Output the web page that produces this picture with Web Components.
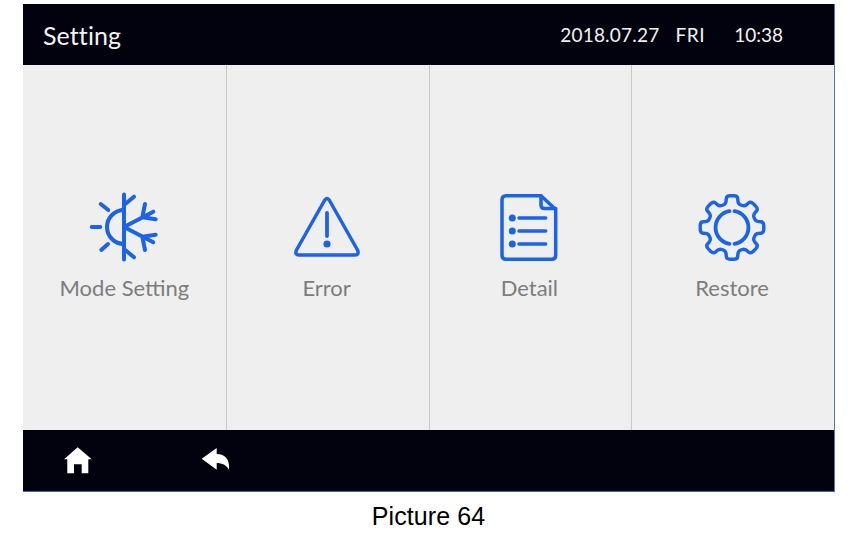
<!DOCTYPE html>
<html>
<head>
<meta charset="utf-8">
<title>Setting</title>
<style>
  html, body { margin: 0; background: #fff; }
  body { width: 856px; height: 536px; overflow: hidden; }
  svg.blue { width: 70px; height: 70px; display: block; fill: none; stroke: #1b63e8; stroke-linecap: round; stroke-linejoin: round; }
  svg.white { width: 30px; height: 30px; display: block; fill: #fff; }
</style>
</head>
<body>
<setting-screen>
  <top-bar title="Setting" date="2018.07.27" day="FRI" time="10:38"></top-bar>
  <tile-grid>
    <menu-tile>
      <svg class="blue" slot="icon" viewBox="0 0 70 70" stroke-width="4">
        <path d="M35 2.5V67.5M35 13L45 4.7M35 57L45 65.3"/>
        <path d="M35 18A17 17 0 0 0 35 52"/>
        <path d="M2.7 35H11.3M11.7 12L19.3 18M12.3 58L19 52"/>
        <path d="M35 35L64.3 19.7M53.3 25.3L56 12M53.3 25.3L66.7 27.3"/>
        <path d="M35 35L64.3 50.3M53.3 44.7L56 58M53.3 44.7L66.7 42.7"/>
      </svg>
      Mode Setting
    </menu-tile>
    <menu-tile>
      <svg class="blue" slot="icon" viewBox="0 0 70 70" stroke-width="3.5">
        <path d="M32.5 8.5Q35 4.5 37.5 8.5L65.5 58Q67.5 63 63 63H7Q2.5 63 4.5 58Z"/>
        <path d="M35 21V44" stroke-width="3.8"/>
        <circle cx="35" cy="52" r="3.6" fill="#1b63e8" stroke="none"/>
      </svg>
      Error
    </menu-tile>
    <menu-tile>
      <svg class="blue" slot="icon" viewBox="0 0 70 70" stroke-width="3.5">
        <path d="M12 3.7H47L61.7 17.5V63.3Q61.7 67.3 57.7 67.3H12Q8 67.3 8 63.3V7.7Q8 3.7 12 3.7Z"/>
        <path d="M47 3.7V13Q47 16.5 50.5 16.5H61.7"/>
        <path d="M25 26H51.7M25 39H51.7M25 52H51.7"/>
        <g fill="#1b63e8" stroke="none">
          <circle cx="18.3" cy="26" r="3.5"/><circle cx="18.3" cy="39" r="3.5"/><circle cx="18.3" cy="52" r="3.5"/>
        </g>
      </svg>
      Detail
    </menu-tile>
    <menu-tile>
      <gear-icon slot="icon"></gear-icon>
      Restore
    </menu-tile>
  </tile-grid>
  <bottom-bar>
    <svg class="white" viewBox="0 0 30 30"><path d="M14.7 1.3L28.7 13.3H25.3V27.3H18.7V18.3H11V27.3H4.3V13.3H1Z"/></svg>
    <svg class="white" viewBox="0 0 30 30"><path d="M1.7 12.7L16.7 2V8C24 8 30 12 29 23.7C26.5 19 22 17 16.7 17V23.7Z"/></svg>
  </bottom-bar>
</setting-screen>
<picture-caption>Picture 64</picture-caption>

<script>
class SettingScreen extends HTMLElement {
  constructor() {
    super();
    this.attachShadow({ mode: 'open' });
    this.shadowRoot.innerHTML = `
      <style>
        :host {
          display: flex;
          flex-direction: column;
          width: 812px;
          height: 488px;
          margin: 4px 0 0 23px;
          box-sizing: border-box;
          border-right: 1px solid #3f7fd0;
          border-bottom: 1px solid #2f6cb8;
        }
      </style>
      <slot></slot>
    `;
  }
}

class TopBar extends HTMLElement {
  constructor() {
    super();
    this.attachShadow({ mode: 'open' });
  }

  connectedCallback() {
    this.shadowRoot.innerHTML = `
      <style>
        :host {
          display: flex;
          align-items: center;
          height: 61px;
          flex: none;
          padding: 0 51px 0 20px;
          background: #02020f;
          color: #f2f2f2;
          font-family: Lato, sans-serif;
        }
        .title { font-size: 25px; letter-spacing: 0.1px; margin-right: auto; }
        .info { font-size: 19px; letter-spacing: 0.2px; }
        .day { margin-left: 16px; letter-spacing: 0.6px; }
        .time { margin-left: 29px; letter-spacing: 0; }
      </style>
      <span class="title">${this.getAttribute('title')}</span>
      <span class="info">${this.getAttribute('date')}</span>
      <span class="info day">${this.getAttribute('day')}</span>
      <span class="info time">${this.getAttribute('time')}</span>
    `;
  }
}

class TileGrid extends HTMLElement {
  constructor() {
    super();
    this.attachShadow({ mode: 'open' });
    this.shadowRoot.innerHTML = `
      <style>
        :host {
          display: grid;
          grid-template-columns: repeat(4, 1fr);
          height: 365px;
          flex: none;
          background: #efeff0;
        }
      </style>
      <slot></slot>
    `;
  }
}

class MenuTile extends HTMLElement {
  constructor() {
    super();
    this.attachShadow({ mode: 'open' });
    this.shadowRoot.innerHTML = `
      <style>
        :host {
          display: flex;
          flex-direction: column;
          align-items: center;
          padding: 127px 2px 0 0;
          box-sizing: border-box;
          border-left: 1px solid #c9c9c9;
          color: #7d7d7d;
          font-family: Lato, sans-serif;
          font-size: 22px;
        }
        :host(:first-child) { border-left: none; padding-right: 0; }
        .label { margin-top: 13px; line-height: 26px; }
      </style>
      <slot name="icon"></slot>
      <div class="label"><slot></slot></div>
    `;
  }
}

// gear outline is computed, eight teeth around the centre, corners rounded
class GearIcon extends HTMLElement {
  constructor() {
    super();
    this.attachShadow({ mode: 'open' });
  }

  connectedCallback() {
    const pts = [];
    for (let i = 0; i < 8; i++) {
      const a = i * Math.PI / 4 - Math.PI / 2;
      [[24.5, -0.25], [32.3, -0.17], [32.3, 0.17], [24.5, 0.25]].forEach(([r, d]) => {
        pts.push([35 + r * Math.cos(a + d), 35.5 + r * Math.sin(a + d)]);
      });
    }
    const t = 0.35;
    const f = (p, q) => (p[0] + (q[0] - p[0]) * t).toFixed(1) + ' ' + (p[1] + (q[1] - p[1]) * t).toFixed(1);
    let d = '';
    pts.forEach((p, i) => {
      const prev = pts[(i + pts.length - 1) % pts.length];
      const next = pts[(i + 1) % pts.length];
      d += (i ? 'L' : 'M') + f(p, prev) + 'Q' + p[0].toFixed(1) + ' ' + p[1].toFixed(1) + ' ' + f(p, next);
    });
    this.shadowRoot.innerHTML = `
      <style>
        :host { display: block; width: 70px; height: 70px; }
        svg { display: block; fill: none; stroke: #1b63e8; stroke-width: 3.4; stroke-linecap: round; stroke-linejoin: round; }
      </style>
      <svg width="70" height="70" viewBox="0 0 70 70">
        <path d="${d}Z"/>
        <path d="M32.5 19.2A16.5 16.5 0 0 0 32.5 51.8M37.5 19.2A16.5 16.5 0 0 1 37.5 51.8" stroke-width="3.8"/>
      </svg>
    `;
  }
}

class BottomBar extends HTMLElement {
  constructor() {
    super();
    this.attachShadow({ mode: 'open' });
    this.shadowRoot.innerHTML = `
      <style>
        :host {
          display: flex;
          align-items: center;
          gap: 107px;
          height: 61px;
          flex: none;
          padding: 0 0 0 40px;
          background: #02020f;
        }
      </style>
      <slot></slot>
    `;
  }
}

class PictureCaption extends HTMLElement {
  constructor() {
    super();
    this.attachShadow({ mode: 'open' });
    this.shadowRoot.innerHTML = `
      <style>
        :host {
          display: block;
          text-align: center;
          margin-top: 9px;
          padding-left: 1px;
          font-family: "Liberation Sans", Arial, sans-serif;
          font-size: 25px;
          letter-spacing: 0.1px;
          line-height: 30px;
          color: #000;
        }
      </style>
      <slot></slot>
    `;
  }
}

customElements.define('setting-screen', SettingScreen);
customElements.define('top-bar', TopBar);
customElements.define('tile-grid', TileGrid);
customElements.define('menu-tile', MenuTile);
customElements.define('gear-icon', GearIcon);
customElements.define('bottom-bar', BottomBar);
customElements.define('picture-caption', PictureCaption);
</script>
</body>
</html>
